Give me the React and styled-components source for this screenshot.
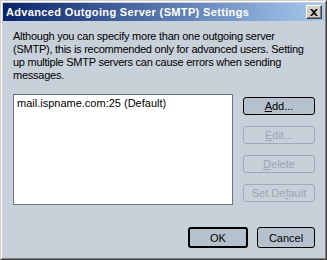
import React from 'react'
import styled, { createGlobalStyle } from 'styled-components'

const Global = createGlobalStyle`
  html, body {
    margin: 0;
    padding: 0;
    background: #c8d0d9;
  }
`

const Frame = styled.div`
  width: 327px;
  height: 260px;
  box-sizing: border-box;
  border: 1px solid;
  border-color: #d4d0c8 #404040 #404040 #d4d0c8;
  font-family: "Liberation Sans", Arial, sans-serif;
  font-size: 11px;
  color: #000;
`

const Inner = styled.div`
  height: 100%;
  box-sizing: border-box;
  border: 1px solid;
  border-color: #ffffff #808080 #808080 #ffffff;
  padding: 1px;
  background: #c8d0d9;
  display: flex;
  flex-direction: column;
`

const TitleBar = styled.div`
  height: 18px;
  display: flex;
  align-items: center;
  justify-content: space-between;
  padding: 0 2px 0 3px;
  background: linear-gradient(to right, #0a246a, #a6caf0);
  color: #fff;
  font-weight: bold;
  font-size: 11px;
  letter-spacing: 0.35px;
`

const CloseBtn = styled.div`
  width: 16px;
  height: 14px;
  box-sizing: border-box;
  background: #d4d0c8;
  border: 1px solid;
  border-color: #ffffff #404040 #404040 #ffffff;
  box-shadow: inset -1px -1px 0 #808080;
  display: flex;
  align-items: center;
  justify-content: center;
`

const Body = styled.div`
  flex: 1;
  display: flex;
  flex-direction: column;
  padding: 9px 9px 9px 10px;
`

const Message = styled.p`
  margin: 0;
  line-height: 13px;
  white-space: nowrap;
  letter-spacing: -0.25px;
`

const Middle = styled.div`
  display: flex;
  gap: 10px;
  margin-top: 12px;
`

const List = styled.div`
  width: 220px;
  height: 111px;
  box-sizing: border-box;
  background: #fff;
  border: 1px solid #6f7383;
  padding: 2px 3px;
`

const Side = styled.div`
  display: flex;
  flex-direction: column;
  gap: 11px;
  padding-top: 3px;
`

const Button = styled.div`
  width: ${p => p.$w || 72}px;
  height: ${p => p.$h || 18}px;
  box-sizing: border-box;
  border: ${p => (p.$default ? 2 : 1)}px solid ${p => (p.$disabled ? '#9eabb9' : '#000')};
  border-radius: 3px;
  background: ${p => (p.$disabled ? '#c8d0d9' : '#b5c1cd')};
  color: ${p => (p.$disabled ? '#9ba6b2' : '#000')};
  display: flex;
  align-items: center;
  justify-content: center;
`

const Footer = styled.div`
  margin-top: auto;
  display: flex;
  justify-content: flex-end;
  gap: 9px;
`

const U = styled.span`
  text-decoration: underline;
`

export default function App() {
  return (
    <>
      <Global />
      <Frame>
        <Inner>
          <TitleBar>
            <span>Advanced Outgoing Server (SMTP) Settings</span>
            <CloseBtn>
              <svg width="8" height="7" viewBox="0 0 8 7">
                <path d="M0 0h2l2 2 2-2h2L5 3.5 8 7H6L4 5 2 7H0l3-3.5z" fill="#000" />
              </svg>
            </CloseBtn>
          </TitleBar>
          <Body>
            <Message>
              Although you can specify more than one outgoing server<br />
              (SMTP), this is recommended only for advanced users. Setting<br />
              up multiple SMTP servers can cause errors when sending<br />
              messages.
            </Message>
            <Middle>
              <List>mail.ispname.com:25 (Default)</List>
              <Side>
                <Button><span><U>A</U>dd...</span></Button>
                <Button $disabled><span><U>E</U>dit...</span></Button>
                <Button $disabled><span><U>D</U>elete</span></Button>
                <Button $disabled><span>Set De<U>f</U>ault</span></Button>
              </Side>
            </Middle>
            <Footer>
              <Button $default $w={60} $h={21}>OK</Button>
              <Button $w={58} $h={21}>Cancel</Button>
            </Footer>
          </Body>
        </Inner>
      </Frame>
    </>
  )
}
